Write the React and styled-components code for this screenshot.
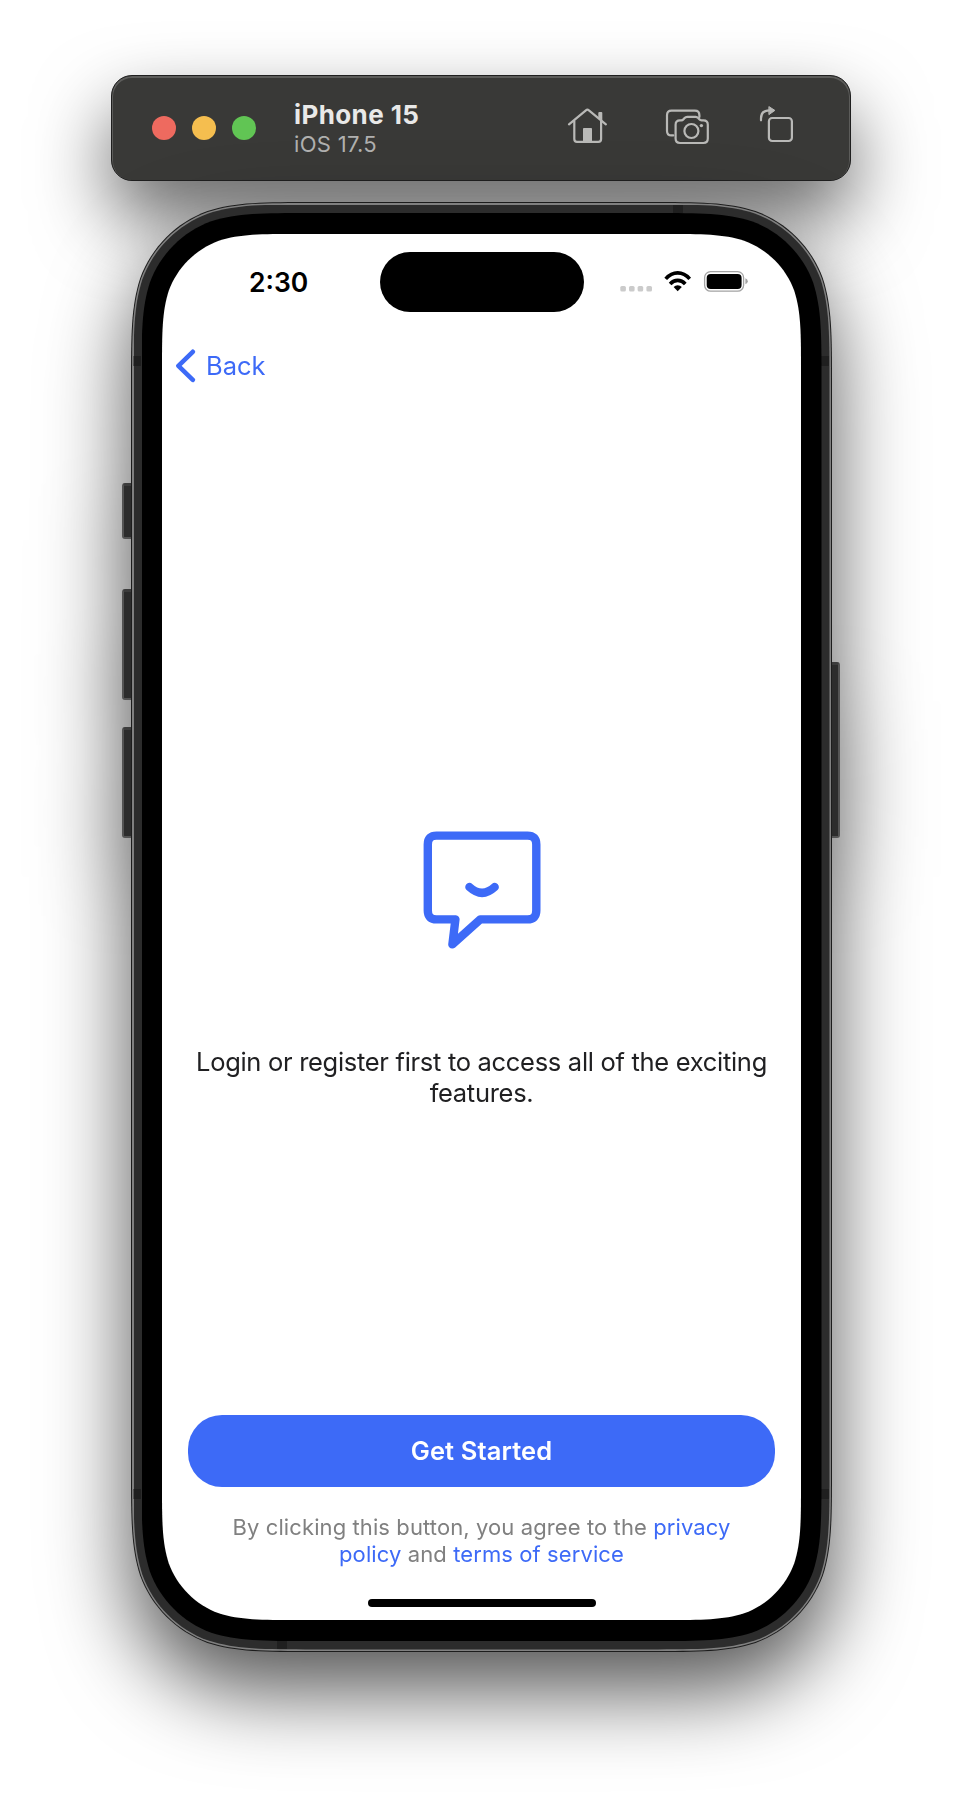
import React from "react";
import styled, { createGlobalStyle } from "styled-components";

const GlobalStyle = createGlobalStyle`
  *, *::before, *::after { box-sizing: border-box; }
  body {
    margin: 0;
    background: #fff;
    font-family: Inter, "Liberation Sans", sans-serif;
  }
`;

const BLUE = "#3d6af7";

// Outline of a rectangle with continuous-curvature corners.
const smoothRect = (w, h, r) => {
  const a = 1.528665 * r;
  const b = 1.088493 * r;
  const c = 0.868407 * r;
  const d = 0.631494 * r;
  const e = 0.074911 * r;
  const f = 0.372824 * r;
  const g = 0.16906 * r;
  return [
    `M${a} 0 L${w - a} 0`,
    `C${w - b} 0 ${w - c} 0 ${w - d} ${e}`,
    `C${w - f} ${g} ${w - g} ${f} ${w - e} ${d}`,
    `C${w} ${c} ${w} ${b} ${w} ${a}`,
    `L${w} ${h - a}`,
    `C${w} ${h - b} ${w} ${h - c} ${w - e} ${h - d}`,
    `C${w - g} ${h - f} ${w - f} ${h - g} ${w - d} ${h - e}`,
    `C${w - c} ${h} ${w - b} ${h} ${w - a} ${h}`,
    `L${a} ${h}`,
    `C${b} ${h} ${c} ${h} ${d} ${h - e}`,
    `C${f} ${h - g} ${g} ${h - f} ${e} ${h - d}`,
    `C0 ${h - c} 0 ${h - b} 0 ${h - a}`,
    `L0 ${a}`,
    `C0 ${b} 0 ${c} ${e} ${d}`,
    `C${g} ${f} ${f} ${g} ${d} ${e}`,
    `C${c} 0 ${b} 0 ${a} 0 Z`,
  ].join(" ");
};

const Desktop = styled.main`
  width: 962px;
  height: 1802px;
  padding: 75px 0 0 111px;
  display: flex;
  flex-direction: column;
  gap: 21px;
  overflow: hidden;
  background: #fff;
`;

const Toolbar = styled.header`
  width: 740px;
  height: 106px;
  flex: none;
  padding: 0 55px 0 40px;
  display: flex;
  align-items: center;
  border-radius: 21px;
  background: #393937;
  border: 1px solid #1f1f1f;
  box-shadow: inset 0 1px 0 1px #5c5c5a, 0 36px 76px rgba(0, 0, 0, 0.6);
`;

const Lights = styled.div`
  display: flex;
  gap: 16px;
`;

const Light = styled.span`
  width: 24px;
  height: 24px;
  border-radius: 50%;
  background: ${(p) => p.$color};
`;

const DeviceInfo = styled.div`
  margin: 1px auto 0 38px;
  display: flex;
  flex-direction: column;
`;

const DeviceName = styled.strong`
  font-size: 26px;
  line-height: 31px;
  font-weight: 700;
  letter-spacing: 0.4px;
  color: #e9e9e8;
`;

const DeviceSystem = styled.span`
  font-size: 22px;
  line-height: 28px;
  letter-spacing: 0.3px;
  color: #b0b0af;
`;

const Tools = styled.div`
  display: flex;
  align-items: center;
  margin-bottom: 4px;
`;

const ToolIcon = styled.svg`
  display: block;
  flex: none;
  margin-left: ${(p) => p.$gap || 0}px;
  fill: none;
  stroke: #b9b9b7;
  stroke-width: 2.2;
  stroke-linecap: round;
  stroke-linejoin: round;
`;

const Phone = styled.section`
  position: relative;
  width: 701px;
  height: 1450px;
  margin-left: 20px;
  flex: none;
  filter: drop-shadow(0 39px 42px rgba(0, 0, 0, 0.67));
`;

const SideKey = styled.span`
  position: absolute;
  ${(p) => (p.$side === "left" ? "left: -9px" : "right: -8px")};
  top: ${(p) => p.$top}px;
  width: 11px;
  height: ${(p) => p.$height}px;
  background: #2c2c2c;
  border: 2px solid #545454;
  border-top: 3px solid #3c3c3c;
  border-radius: ${(p) => (p.$side === "left" ? "3px 0 0 3px" : "0 3px 3px 0")};
`;

const Shell = styled.div`
  width: ${(p) => p.$w}px;
  height: ${(p) => p.$h}px;
  padding: ${(p) => p.$pad};
  background: ${(p) => p.$color};
  clip-path: path("${(p) => smoothRect(p.$w, p.$h, p.$r)}");
`;

const AntennaBand = styled.span`
  position: absolute;
  left: ${(p) => p.$x}px;
  top: ${(p) => p.$y}px;
  width: ${(p) => (p.$upright ? 10 : 8)}px;
  height: ${(p) => (p.$upright ? 8 : 10)}px;
  background: #1f1f1f;
`;

const Screen = styled(Shell)`
  display: flex;
  flex-direction: column;
`;

const StatusBar = styled.div`
  height: 78px;
  padding: 18px 53px 0 87px;
  display: flex;
  align-items: flex-start;
`;

const Clock = styled.time`
  width: 131px;
  padding-top: 14px;
  font-size: 26.5px;
  line-height: 32px;
  font-weight: 600;
  color: #000;
`;

const Island = styled.div`
  width: 204px;
  height: 60px;
  margin-right: auto;
  border-radius: 30px;
  background: #000;
`;

const StatusIcons = styled.svg`
  display: block;
  margin-top: 17px;
`;

const NavBar = styled.nav`
  height: 68px;
  margin-top: 20px;
  padding-left: 13px;
  display: flex;
  align-items: center;
`;

const BackButton = styled.button`
  display: flex;
  align-items: center;
  gap: 10px;
  padding: 0;
  border: 0;
  background: none;
  font: 400 25.5px/32px Inter, sans-serif;
  color: ${BLUE};
`;

const Welcome = styled.div`
  flex: 1;
  display: flex;
  flex-direction: column;
  align-items: center;
  padding-top: 430px;
`;

const Message = styled.p`
  margin: 96px 0 0;
  width: 600px;
  text-align: center;
  font-size: 25.5px;
  line-height: 31px;
  letter-spacing: -0.3px;
  color: #202022;
`;

const Footer = styled.footer`
  height: 205px;
  display: flex;
  flex-direction: column;
  align-items: center;
`;

const PrimaryButton = styled.button`
  width: 587px;
  height: 72px;
  flex: none;
  padding: 0;
  border: 0;
  border-radius: 34px;
  background: ${BLUE};
  color: #fff;
  font: 600 25.5px/32px Inter, sans-serif;
  letter-spacing: 0.12px;
`;

const Legal = styled.p`
  margin: 26.5px 0 0;
  width: 540px;
  text-align: center;
  font-size: 22px;
  line-height: 27.6px;
  letter-spacing: 0.1px;
  color: #808080;
`;

const LegalLink = styled.a`
  color: ${BLUE};
`;

const HomeIndicator = styled.div`
  width: 228px;
  height: 8px;
  margin: auto 0 13px;
  border-radius: 4px;
  background: #000;
`;

const HomeIcon = () => (
  <ToolIcon width="42" height="40" viewBox="567 106 42 40">
    <path d="M569 124.3 L585.9 110.3 Q587.4 109.1 588.9 110.3 L605.9 124.3" />
    <path d="M574.3 121 V139 Q574.3 141.8 577 141.8 H598.4 Q601.1 141.8 601.1 139 V121" />
    <path d="M583 141 V128.8 Q583 128 583.8 128 H591.2 Q592 128 592 128.8 V141 Z" fill="#b9b9b7" stroke="none" />
    <path d="M598.3 117 V113 Q598.3 112 599.3 112 H601.3 Q602.3 112 602.3 113 V121 Z" fill="#b9b9b7" stroke="none" />
  </ToolIcon>
);

const ScreenshotIcon = () => (
  <ToolIcon width="46" height="40" viewBox="665 106 46 40" $gap={56}>
    <path d="M673.2 135.4 H671.5 Q667 135.4 667 130.9 V115.2 Q667 110.7 671.5 110.7 H694.9 Q699.4 110.7 699.4 115.2 V117" />
    <path d="M680 120.4 H681.2 Q682.6 120.4 683.5 119.3 L684.6 118 Q685.6 116.8 687.2 116.8 H695.6 Q697.2 116.8 698.2 118 L699.3 119.3 Q700.2 120.4 701.6 120.4 H703.4 Q707.8 120.4 707.8 124.8 V138.6 Q707.8 143 703.4 143 H680 Q675.6 143 675.6 138.6 V124.8 Q675.6 120.4 680 120.4 Z" />
    <circle cx="691.4" cy="131" r="7" />
    <circle cx="701.4" cy="125.6" r="1.7" fill="#b9b9b7" stroke="none" />
  </ToolIcon>
);

const RotateIcon = () => (
  <ToolIcon width="36" height="40" viewBox="759 106 36 40" $gap={48}>
    <rect x="768.9" y="118" width="23" height="23" rx="3.2" />
    <path d="M761 120.3 V118.5 Q761 110.3 769.5 110.3" />
    <path d="M769.2 106.8 L774.9 110.4 L769.2 114.4 Z" fill="#b9b9b7" strokeWidth="1" />
  </ToolIcon>
);

const StatusGlyphs = () => (
  <StatusIcons width="128" height="24" viewBox="620 269 128 24">
    {[620.3, 629, 637.6, 646.4].map((x) => (
      <rect key={x} x={x} y="286" width="5.6" height="5.6" rx="1.6" fill="#cbcbcb" />
    ))}
    <g fill="none" stroke="#000" strokeWidth="3.6">
      <path d="M665.7 278.9 Q671 272.9 677.7 272.9 Q684.4 272.9 689.7 278.9" />
      <path d="M670.1 284 Q673.4 280.4 677.7 280.4 Q682 280.4 685.3 284" />
    </g>
    <path d="M677.7 291.3 L673.6 287 Q675.3 285.2 677.7 285.2 Q680.1 285.2 681.8 287 Z" />
    <rect x="704.6" y="271.6" width="39" height="19.6" rx="6" fill="none" stroke="#a3a3a3" strokeWidth="1.3" />
    <rect x="706.7" y="273.9" width="34.9" height="15.2" rx="4" />
    <path d="M745.4 278.3 Q747.8 279.3 747.8 281.3 Q747.8 283.3 745.4 284.3 Z" fill="#a3a3a3" />
  </StatusIcons>
);

const ChevronIcon = () => (
  <svg width="21" height="34" viewBox="175 349 21 34" fill="none" stroke={BLUE} strokeWidth="4.6" strokeLinecap="round" strokeLinejoin="round">
    <path d="M192.8 351.8 L178.4 365.8 L192.8 379.8" />
  </svg>
);

const ChatIcon = () => (
  <svg width="120" height="120" viewBox="421.5 830 120 120" fill="none" stroke={BLUE} strokeWidth="8.4" strokeLinecap="round" strokeLinejoin="round">
    <path d="M436 835.6 H527 Q535.8 835.6 535.8 844.4 V910.6 Q535.8 919.4 527 919.4 H479.8 L451.9 944.4 L454.9 919.4 H436 Q427.3 919.4 427.3 910.6 V844.4 Q427.3 835.6 436 835.6 Z" />
    <path d="M468.9 887 Q481.6 898.6 494.2 887" />
  </svg>
);

const KEYS = [
  ["left", 281, 56],
  ["left", 387, 111],
  ["left", 525, 111],
  ["right", 460, 176],
];

const BANDS = [
  [542, 3, true],
  [146, 1439, true],
  [2, 154, false],
  [690, 154, false],
  [2, 1287, false],
  [690, 1287, false],
];

export default function App() {
  return (
    <>
      <GlobalStyle />
      <Desktop>
        <Toolbar>
          <Lights>
            <Light $color="#ee6a5f" />
            <Light $color="#f5be4f" />
            <Light $color="#61c554" />
          </Lights>
          <DeviceInfo>
            <DeviceName>iPhone 15</DeviceName>
            <DeviceSystem>iOS 17.5</DeviceSystem>
          </DeviceInfo>
          <Tools>
            <HomeIcon />
            <ScreenshotIcon />
            <RotateIcon />
          </Tools>
        </Toolbar>
        <Phone>
          {KEYS.map(([side, top, height]) => (
            <SideKey key={side + top} $side={side} $top={top} $height={height} />
          ))}
          <Shell $w={701} $h={1450} $r={121} $pad="1px" $color="#1c1c1c">
            <Shell $w={699} $h={1448} $r={120} $pad="1.5px" $color="#808080">
              <Shell $w={696} $h={1445} $r={118.5} $pad="8.5px 8px" $color="#2c2c2c">
                {BANDS.map(([x, y, upright]) => (
                  <AntennaBand key={`${x}-${y}`} $x={x} $y={y} $upright={upright} />
                ))}
                <Shell $w={680} $h={1428} $r={110.5} $pad="21px 20.5px" $color="#000">
                  <Screen $w={639} $h={1386} $r={90} $pad="0" $color="#fff">
                    <StatusBar>
                      <Clock>2:30</Clock>
                      <Island />
                      <StatusGlyphs />
                    </StatusBar>
                    <NavBar>
                      <BackButton>
                        <ChevronIcon />
                        Back
                      </BackButton>
                    </NavBar>
                    <Welcome>
                      <ChatIcon />
                      <Message>Login or register first to access all of the exciting features.</Message>
                    </Welcome>
                    <Footer>
                      <PrimaryButton>Get Started</PrimaryButton>
                      <Legal>
                        By clicking this button, you agree to the <LegalLink>privacy policy</LegalLink> and{" "}
                        <LegalLink>terms of service</LegalLink>
                      </Legal>
                      <HomeIndicator />
                    </Footer>
                  </Screen>
                </Shell>
              </Shell>
            </Shell>
          </Shell>
        </Phone>
      </Desktop>
    </>
  );
}
